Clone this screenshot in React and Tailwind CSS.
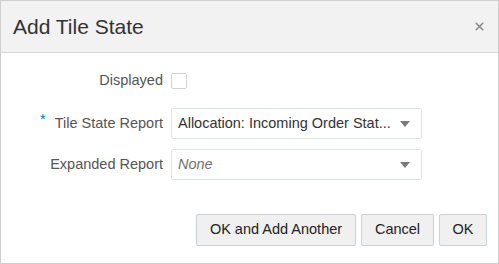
import { X } from "lucide-react";

function Caret() {
  return (
    <svg width="10" height="6" viewBox="0 0 10 6" className="shrink-0">
      <path d="M0 0 L10 0 L5 6 Z" fill="#7a7a7a" />
    </svg>
  );
}

function SelectBox({ value, placeholder }) {
  return (
    <div className="flex h-[31px] w-[251px] items-center justify-between rounded-[2px] border border-[#dfe4e7] bg-white pl-[6px] pr-[11px]">
      {placeholder ? (
        <span className="italic text-[#707070]">{value}</span>
      ) : (
        <span className="text-[#333333]">{value}</span>
      )}
      <Caret />
    </div>
  );
}

export default function App() {
  return (
    <div
      className="flex h-[264px] w-[499px] flex-col border border-[#cfcfcf] bg-white text-[14.5px]"
      style={{ fontFamily: '"Liberation Sans", Arial, sans-serif' }}
    >
      {/* header */}
      <div className="flex h-[52px] items-center justify-between border-b border-[#d6d6d6] bg-[#f2f2f2] pl-[12px] pr-[12px]">
        <h1 className="text-[21px] text-[#333333]">Add Tile State</h1>
        <X size={13} strokeWidth={3} className="text-[#8a8a8a]" />
      </div>

      {/* form */}
      <div className="flex flex-col pt-[20px]">
        <div className="flex h-[16px] items-center">
          <div className="w-[170px] pr-[8px] text-right text-[#555555]">Displayed</div>
          <div className="h-[16px] w-[16px] rounded-[2px] border border-[#d2d2d2] bg-white" />
        </div>

        <div className="mt-[19px] flex items-center">
          <div className="flex w-[170px] justify-end pr-[8px] text-[#555555]">
            <span className="relative -top-[4px] mr-[9px] text-[#0572ce]">*</span>
            <span>Tile State Report</span>
          </div>
          <SelectBox value="Allocation: Incoming Order Stat..." />
        </div>

        <div className="mt-[10px] flex items-center">
          <div className="w-[170px] pr-[8px] text-right text-[#555555]">Expanded Report</div>
          <SelectBox value="None" placeholder />
        </div>
      </div>

      {/* buttons */}
      <div className="mt-[34px] flex justify-end gap-[5px] pr-[11px]">
        <button className="h-[32px] w-[160px] rounded-[2px] border border-[#c9d0d6] bg-[#f0f0f0] text-[#222222]">
          OK and Add Another
        </button>
        <button className="h-[32px] w-[73px] rounded-[2px] border border-[#c9d0d6] bg-[#f0f0f0] text-[#222222]">
          Cancel
        </button>
        <button className="h-[32px] w-[48px] rounded-[2px] border border-[#c9d0d6] bg-[#f0f0f0] text-[#222222]">
          OK
        </button>
      </div>
    </div>
  );
}
